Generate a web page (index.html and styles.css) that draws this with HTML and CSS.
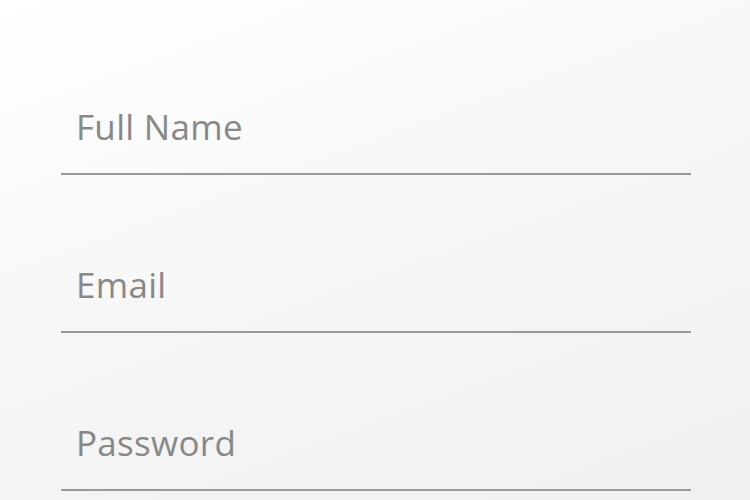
FILE: index.html
```html
<!DOCTYPE html>
<html>
<head>
<meta charset="utf-8">
<link rel="stylesheet" href="styles.css">
</head>
<body>
<form class="form">
  <div class="field"><span class="placeholder">Full Name</span></div>
  <div class="field"><span class="placeholder">Email</span></div>
  <div class="field"><span class="placeholder">Password</span></div>
</form>
</body>
</html>
```
FILE: styles.css
```css
html, body {
  margin: 0;
  height: 100%;
}
body {
  background: linear-gradient(160deg, #ffffff 0%, #f6f6f7 50%, #eff0f2 100%);
  font-family: "Open Sans", "Noto Sans", sans-serif;
  overflow: hidden;
}
.form {
  display: flex;
  flex-direction: column;
  padding: 17px 59px 0 61px;
}
.field {
  padding: 90px 0 26px 15px;
  border-bottom: 2px solid #999999;
  font-size: 35px;
  line-height: 40px;
  height: 40px;
  letter-spacing: 0.3px;
}
.placeholder {
  color: #888888;
}
```
